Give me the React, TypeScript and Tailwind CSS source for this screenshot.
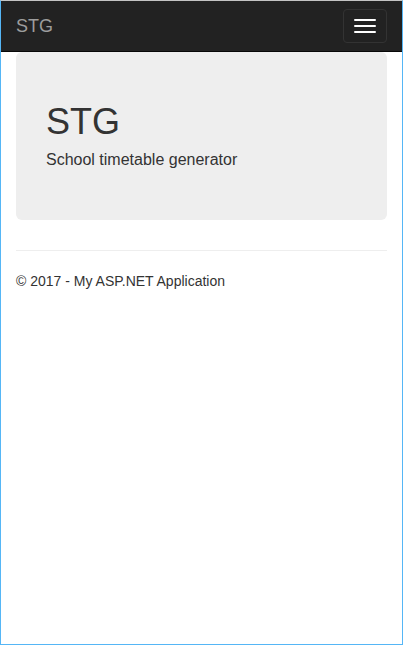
export default function App() {
    return (
        <div className="w-[403px] h-[645px] border-x border-b border-x-[#55b6f6] border-b-[#55b6f6] border-t border-t-[#c4c4c4] bg-white font-['Liberation_Sans',Arial,sans-serif] text-[#333]">
            {/* Navbar */}
            <nav className="h-[51px] bg-[#222] border-b border-[#080808] flex items-start justify-between">
                <span className="px-[15px] py-[15px] text-[18px] leading-[20px] text-[#9d9d9d]">STG</span>
                <button className="mt-[8px] mr-[15px] w-[44px] h-[34px] border border-[#333] rounded-[4px] flex flex-col items-center justify-center gap-[4px]">
                    <span className="block w-[22px] h-[2px] bg-white rounded-[1px]" />
                    <span className="block w-[22px] h-[2px] bg-white rounded-[1px]" />
                    <span className="block w-[22px] h-[2px] bg-white rounded-[1px]" />
                </button>
            </nav>

            {/* Body */}
            <div className="px-[15px]">
                <div className="bg-[#eee] rounded-[6px] px-[30px] pt-[50px] pb-[30px]">
                    <h1 className="text-[36px] leading-[39.6px] mb-[7px] font-normal">STG</h1>
                    <p className="text-[16px] leading-[22.4px] mb-[19px]">School timetable generator</p>
                </div>
                <hr className="mt-[30px] mb-[20px] border-0 border-t border-[#eee]" />
                <footer>
                    <p className="text-[14px] leading-[20px]">© 2017 - My ASP.NET Application</p>
                </footer>
            </div>
        </div>
    )
}
